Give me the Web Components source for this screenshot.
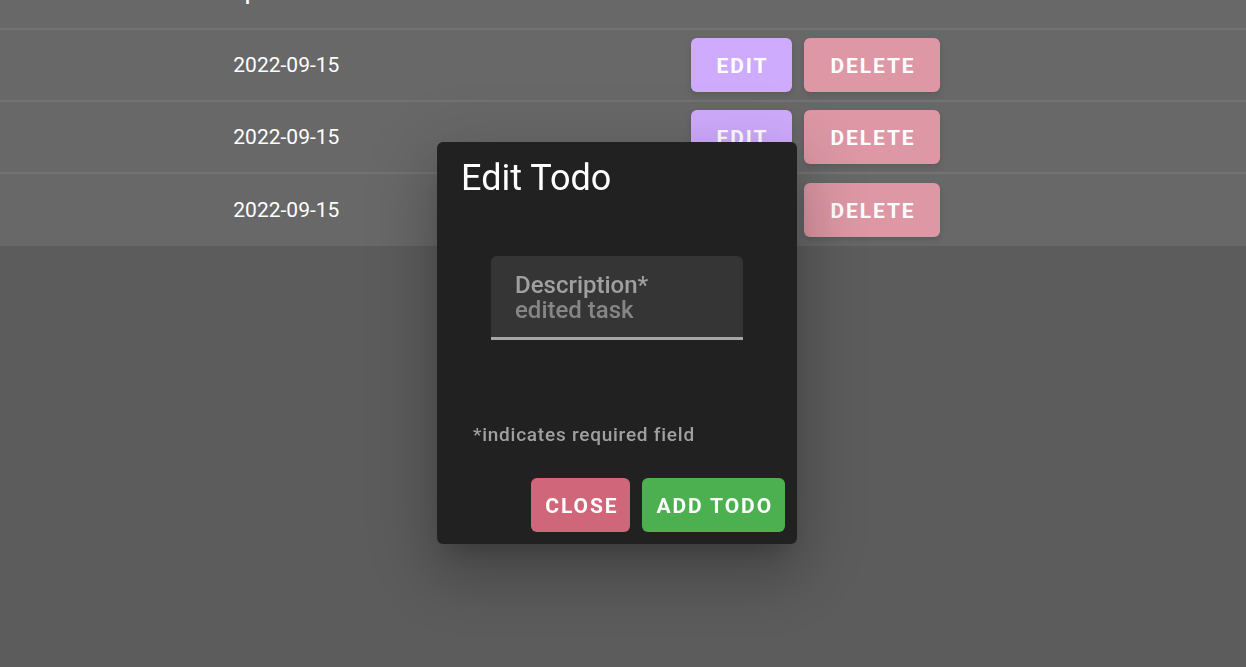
<!DOCTYPE html>
<html lang="en">
<head>
<meta charset="utf-8">
<title>Todos</title>
<style>
body { margin: 0; min-height: 100vh; background: #5c5c5c; color: #fff; font-family: Roboto, "Liberation Sans", sans-serif; overflow: hidden; }
</style>
</head>
<body>
<todo-table></todo-table>
<todo-dialog heading="Edit Todo">
  <todo-field label="Description*" placeholder="edited task"></todo-field>
  <span slot="note">*indicates required field</span>
  <todo-button slot="actions" kind="close">CLOSE</todo-button>
  <todo-button slot="actions" kind="add">ADD TODO</todo-button>
</todo-dialog>
<script>
class TodoButton extends HTMLElement {
  connectedCallback() {
    this.attachShadow({ mode: 'open' }).innerHTML = `
      <style>
        :host { display: inline-flex; }
        button { height: 54px; padding: 2px 24px 0 26px; border: 0; border-radius: 6px; font: 700 21px Roboto, "Liberation Sans", sans-serif; letter-spacing: 0.09em; color: #fff; white-space: nowrap; box-shadow: 0 3px 6px rgba(0,0,0,.12); }
        :host([kind=edit]) button { background: #cfabfd; }
        :host([kind=delete]) button { background: #dd97a5; }
        :host([kind=close]) button, :host([kind=add]) button { padding: 2px 12px 0 14px; box-shadow: none; }
        :host([kind=close]) button { background: #cf6679; }
        :host([kind=add]) button { background: #4caf50; }
      </style>
      <button type="button"><slot></slot></button>`;
  }
}
class TodoTable extends HTMLElement {
  connectedCallback() {
    const row = `<tr><td></td><td>2022-09-15</td><td><div class="actions">
      <todo-button kind="edit">EDIT</todo-button><todo-button kind="delete">DELETE</todo-button></div></td></tr>`;
    this.attachShadow({ mode: 'open' }).innerHTML = `
      <style>
        :host { display: block; margin-top: -42px; background: #686868; }
        table { width: 100%; table-layout: fixed; border-collapse: separate; border-spacing: 0; }
        .first { width: 16.8%; }
        .date { width: 36.7%; }
        th, td { box-sizing: border-box; height: 72px; padding: 0 24px; text-align: left; border-bottom: 2px solid #737373; }
        th { font-size: 18px; font-weight: 700; }
        td { font-size: 21px; font-weight: 400; }
        tbody tr:last-child td { border-bottom: 0; }
        .actions { display: flex; gap: 12px; }
      </style>
      <table>
        <colgroup><col class="first"><col class="date"><col></colgroup>
        <thead><tr><th></th><th>Updated</th><th></th></tr></thead>
        <tbody>${row.repeat(3)}</tbody>
      </table>`;
  }
}
class TodoField extends HTMLElement {
  connectedCallback() {
    this.attachShadow({ mode: 'open' }).innerHTML = `
      <style>
        :host { display: block; }
        .box { box-sizing: border-box; height: 84px; padding: 17px 24px 0; background: #353535; border-bottom: 3px solid #a6a6a6; border-radius: 6px 6px 0 0; }
        label, input { display: block; width: 100%; height: 25px; line-height: 25px; font-size: 24px; font-weight: 500; font-family: inherit; color: #a0a0a0; }
        input { box-sizing: border-box; padding: 0; border: 0; outline: 0; background: none; }
        input::placeholder { color: #868686; opacity: 1; }
      </style>
      <div class="box">
        <label for="field">${this.getAttribute('label')}</label>
        <input id="field" type="text" placeholder="${this.getAttribute('placeholder')}">
      </div>`;
  }
}
class TodoDialog extends HTMLElement {
  connectedCallback() {
    this.attachShadow({ mode: 'open' }).innerHTML = `
      <style>
        :host { position: fixed; inset: 0; box-sizing: border-box; display: flex; align-items: center; justify-content: center; padding: 19px 12px 0 0; }
        section { box-sizing: border-box; width: 360px; padding: 12px; background: #212121; border-radius: 6px; box-shadow: 0 17px 23px -11px rgba(0,0,0,.2), 0 36px 57px 5px rgba(0,0,0,.14), 0 14px 69px 12px rgba(0,0,0,.12); }
        h2 { margin: 0 12px; font-size: 36px; line-height: 48px; font-weight: 400; }
        .content { padding: 54px 42px 0; }
        .note { padding: 80px 24px 0; font-size: 19px; line-height: 30px; font-weight: 500; letter-spacing: 0.04em; color: #a0a0a0; }
        footer { display: flex; justify-content: flex-end; gap: 12px; padding-top: 28px; }
      </style>
      <section role="dialog" aria-labelledby="heading">
        <h2 id="heading">${this.getAttribute('heading')}</h2>
        <div class="content"><slot></slot></div>
        <div class="note"><slot name="note"></slot></div>
        <footer><slot name="actions"></slot></footer>
      </section>`;
  }
}
customElements.define('todo-button', TodoButton);
customElements.define('todo-table', TodoTable);
customElements.define('todo-field', TodoField);
customElements.define('todo-dialog', TodoDialog);
</script>
</body>
</html>
